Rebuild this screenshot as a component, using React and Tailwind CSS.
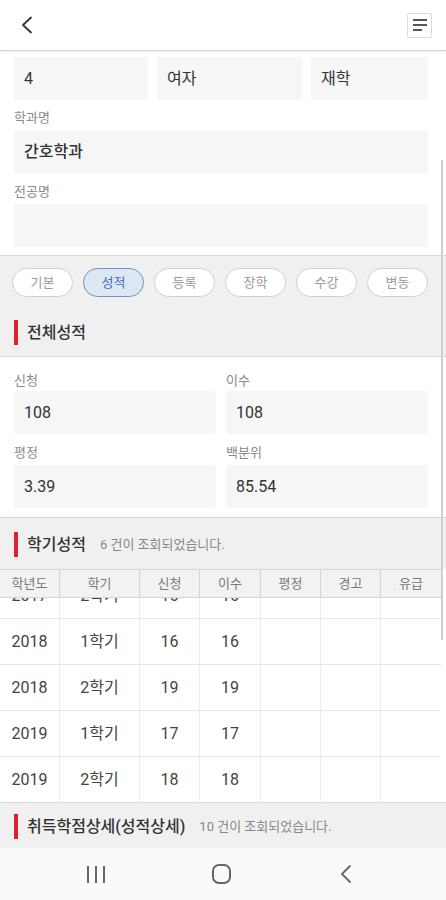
import React from "react";

const FONT = { fontFamily: "Roboto, 'Noto Sans CJK KR', 'Noto Sans', sans-serif" };

function Label({ children, className = "" }) {
  return (
    <div className={"text-[13px] leading-[18px] text-[#8a8a8a] " + className}>{children}</div>
  );
}

function Box({ children, className = "", h = "h-[43px]" }) {
  return (
    <div className={"flex items-center rounded-[3px] bg-[#f6f6f6] px-[10px] text-[16px] text-[#333] " + h + " " + className}>
      {children}
    </div>
  );
}

function SectionTitle({ title, count, className = "" }) {
  return (
    <div className={"flex items-center bg-[#f0f0f0] pl-[14px] " + className}>
      <div className="h-[25px] w-[4px] bg-[#e0202a]" />
      <div className="ml-[9px] text-[16px] font-medium text-[#333]">{title}</div>
      {count && <div className="ml-[14px] text-[13px] text-[#888]">{count}</div>}
    </div>
  );
}

const tabs = ["기본", "성적", "등록", "장학", "수강", "변동"];
const cols = [
  { name: "학년도", w: "w-[60px]" },
  { name: "학기", w: "w-[80px]" },
  { name: "신청", w: "w-[60px]" },
  { name: "이수", w: "w-[61px]" },
  { name: "평정", w: "w-[60px]" },
  { name: "경고", w: "w-[60px]" },
  { name: "유급", w: "w-[60px]" },
];
const rows = [
  ["2017", "2학기", "16", "16"],
  ["2018", "1학기", "16", "16"],
  ["2018", "2학기", "19", "19"],
  ["2019", "1학기", "17", "17"],
  ["2019", "2학기", "18", "18"],
];

export default function App() {
  return (
    <div style={FONT} className="relative flex h-[900px] w-[446px] flex-col overflow-hidden bg-white">
      {/* Header */}
      <div className="relative z-10 flex h-[51px] shrink-0 items-center justify-between border-b border-[#d6d6d6] bg-white pl-[20px] pr-[14px] shadow-[0_1px_2px_rgba(0,0,0,0.06)]">
        <svg width="14" height="18" viewBox="0 0 14 18" fill="none">
          <path d="M11 1.5 L3 9 L11 16.5" stroke="#333" strokeWidth="1.8" strokeLinecap="round" strokeLinejoin="round" />
        </svg>
        <div className="flex h-[25px] w-[25px] flex-col justify-center gap-[3px] rounded-[2px] border border-[#dcdcdc] bg-white pl-[5px]">
          <div className="h-[2px] w-[14px] bg-[#555]" />
          <div className="h-[2px] w-[14px] bg-[#555]" />
          <div className="h-[2px] w-[9px] bg-[#555]" />
        </div>
      </div>

      {/* Main */}
      <div className="relative flex-1 overflow-hidden">
        {/* Student info */}
        <div className="border-b border-[#dadada] pb-[8px] pl-[14px] pr-[18px]">
          <div className="-mt-[15px] grid grid-cols-[134px_145px_1fr] gap-x-[9px]">
            <div>
              <div className="h-[18px]" />
              <Box className="mt-[3px]">4</Box>
            </div>
            <div>
              <div className="h-[18px]" />
              <Box className="mt-[3px]">여자</Box>
            </div>
            <div>
              <Label>학적상태</Label>
              <Box className="mt-[3px]">재학</Box>
            </div>
          </div>
          <Label className="mt-[9px]">학과명</Label>
          <Box className="mt-[4px] font-medium" h="h-[42px]">간호학과</Box>
          <Label className="mt-[10px]">전공명</Label>
          <Box className="mt-[3px]"></Box>
        </div>

        {/* Tabs */}
        <div className="flex items-center gap-[10px] bg-[#f0f0f0] pl-[12px] pt-[12px]">
          {tabs.map((t, i) => (
            <div
              key={t}
              className={
                "flex h-[29px] w-[61px] items-center justify-center rounded-full border text-[13px] " +
                (i === 1
                  ? "border-[#6b93c6] bg-[#dce7f4] text-[#3d6dae]"
                  : "border-[#cfcfcf] bg-white text-[#999]")
              }
            >
              {t}
            </div>
          ))}
        </div>
        <SectionTitle title="전체성적" className="border-b border-[#d8d8d8] pb-[11px] pt-[23px]" />

        {/* Totals card */}
        <div className="border-b border-[#d8d8d8] bg-white pb-[9px] pl-[14px] pr-[18px] pt-[15px]">
          <div className="grid grid-cols-2 gap-x-[10px]">
            <div>
              <Label>신청</Label>
              <Box className="mt-[1px]">108</Box>
            </div>
            <div>
              <Label>이수</Label>
              <Box className="mt-[1px]">108</Box>
            </div>
            <div className="mt-[10px]">
              <Label>평정</Label>
              <Box className="mt-[3px]">3.39</Box>
            </div>
            <div className="mt-[10px]">
              <Label>백분위</Label>
              <Box className="mt-[3px]">85.54</Box>
            </div>
          </div>
        </div>

        <SectionTitle title="학기성적" count="6 건이 조회되었습니다." className="pb-[12px] pt-[14px]" />

        {/* Table */}
        <div className="w-[441px]">
          <div className="relative z-[1] flex h-[29px] border-y border-[#d4d4d4] bg-[#f2f2f2]">
            {cols.map((c, i) => (
              <div
                key={c.name}
                className={
                  c.w +
                  " flex items-center justify-center text-[13px] text-[#7a7a7a] " +
                  (i < cols.length - 1 ? "border-r border-[#d4d4d4]" : "")
                }
              >
                {c.name}
              </div>
            ))}
          </div>
          <div className="h-[204px] overflow-hidden">
            <div className="-mt-[25px]">
              {rows.map((r, ri) => (
                <div key={ri} className="flex h-[46px] border-b border-[#e6e6e6]">
                  {cols.map((c, i) => (
                    <div
                      key={c.name}
                      className={
                        c.w +
                        " flex items-center justify-center text-[16px] text-[#444] " +
                        (i < cols.length - 1 ? "border-r border-[#ececec]" : "")
                      }
                    >
                      {r[i] || ""}
                    </div>
                  ))}
                </div>
              ))}
            </div>
          </div>
        </div>

        <SectionTitle
          title="취득학점상세(성적상세)"
          count="10 건이 조회되었습니다."
          className="border-t border-[#dcdcdc] pb-[9px] pt-[11px]"
        />

        {/* scrollbar */}
        <div className="absolute left-[441px] top-[109px] h-[480px] w-[2px] bg-[#cfcfcf]" />
      </div>

      {/* Android nav bar */}
      <div className="flex h-[52px] shrink-0 items-center justify-center gap-[85px] bg-[#fafafa] pr-[4px]">
        <div className="flex w-[40px] justify-center gap-[6px]">
          <div className="h-[17px] w-[2px] bg-[#666]" />
          <div className="h-[17px] w-[2px] bg-[#666]" />
          <div className="h-[17px] w-[2px] bg-[#666]" />
        </div>
        <div className="flex w-[40px] justify-center">
          <div className="h-[20px] w-[19px] rounded-[7px] border-2 border-[#666]" />
        </div>
        <div className="flex w-[40px] justify-center">
          <svg width="12" height="20" viewBox="0 0 12 20" fill="none">
            <path d="M10 2 L2 10 L10 18" stroke="#666" strokeWidth="1.8" strokeLinecap="round" strokeLinejoin="round" />
          </svg>
        </div>
      </div>
    </div>
  );
}
